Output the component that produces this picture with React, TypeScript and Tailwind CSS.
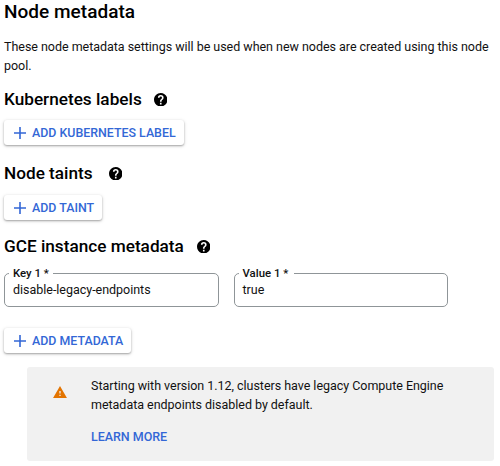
import React from 'react';

function HelpIcon() {
  return (
    <svg viewBox="2 2 20 20" className="mt-px size-[13.5px] shrink-0" fill="#000">
      <path d="M12 2C6.48 2 2 6.48 2 12s4.48 10 10 10 10-4.48 10-10S17.52 2 12 2zm1.2 17h-2.4v-2.4h2.4V19zm2.3-7.75-.9.92C13.7 12.9 13.2 13.5 13.2 15h-2.4v-.5c0-1.1.45-2.1 1.17-2.83l1.24-1.26c.37-.36.59-.86.59-1.41a1.8 1.8 0 0 0-3.6 0H7.8a4.2 4.2 0 0 1 8.4 0c0 .88-.36 1.68-.7 2.25z" />
    </svg>
  );
}

function SectionTitle({ children, gap }: { children: React.ReactNode; gap: string }) {
  return (
    <h2 className={`flex h-6 items-center text-[17.2px] font-medium leading-6 whitespace-nowrap ${gap}`}>
      <span>{children}</span>
      <HelpIcon />
    </h2>
  );
}

function AddButton({ label, className }: { label: string; className: string }) {
  return (
    <button
      className={`flex h-[25px] items-center gap-[6px] rounded-[3px] bg-white pl-[10px] text-[12.4px] font-medium whitespace-nowrap text-[#3367d6] shadow-[0_1px_2px_rgba(0,0,0,0.3),0_1px_4px_rgba(0,0,0,0.12)] ${className}`}
    >
      <svg viewBox="0 0 12 12" className="size-3 shrink-0" fill="none" stroke="currentColor" strokeWidth="1.6">
        <path d="M6 0v12M0 6h12" />
      </svg>
      <span className="pt-px">{label}</span>
    </button>
  );
}

function Field({ label, value, legendWidth }: { label: string; value: string; legendWidth: string }) {
  return (
    <fieldset className="h-[40px] w-[214.5px] rounded-[5px] border border-[#8f9598] pl-[4px]">
      <legend className={`h-[13px] pl-[4px] text-[11.4px] font-medium leading-[13px] whitespace-nowrap ${legendWidth}`}>{label}</legend>
      <div className="pl-[4px] text-[12.5px] leading-[19px] tracking-[-0.02px]">{value}</div>
    </fieldset>
  );
}

export default function App() {
  return (
    <main
      className="h-[466px] w-[500px] overflow-hidden bg-white pl-1 text-[#111]"
      style={{ fontFamily: 'Roboto, "Liberation Sans", sans-serif' }}
    >
      <h1 className="h-6 text-[19px] font-medium leading-6 tracking-[0.03px] text-black">Node metadata</h1>
      <p className="mt-[13px] text-[12.5px] leading-[19px] tracking-[-0.03px] whitespace-nowrap">
        These node metadata settings will be used when new nodes are created using this node
        <br />
        pool.
      </p>
      <div className="mt-[12px] text-black">
        <SectionTitle gap="gap-[12px]">Kubernetes labels</SectionTitle>
      </div>
      <AddButton label="ADD KUBERNETES LABEL" className="mt-[9px] w-[180px]" />
      <div className="mt-[16px] text-black">
        <SectionTitle gap="gap-[16px]">Node taints</SectionTitle>
      </div>
      <AddButton label="ADD TAINT" className="mt-[10px] w-[98px]" />
      <div className="mt-[14px] text-black">
        <SectionTitle gap="gap-[13px]">GCE instance metadata</SectionTitle>
      </div>
      <div className="mt-[9px] flex gap-[15px]">
        <Field label="Key 1 *" value="disable-legacy-endpoints" legendWidth="w-[44px]" />
        <Field label="Value 1 *" value="true" legendWidth="w-[55px]" />
      </div>
      <AddButton label="ADD METADATA" className="mt-[21px] w-[127px]" />
      <section className="mt-[14px] ml-[23px] flex h-[94px] w-[467px] rounded-[3px] bg-[#f1f1f1] pt-[9px] pl-[25.5px]">
        <svg viewBox="1 2 22 19" className="mt-[10px] h-[12px] w-[14px] shrink-0" fill="#e37400">
          <path d="M1 21h22L12 2 1 21zm12-3h-2v-2h2v2zm0-4h-2v-4h2v4z" />
        </svg>
        <div className="ml-[24.5px] text-[12.5px] leading-[19px] tracking-[-0.03px] whitespace-nowrap">
          <p>
            Starting with version 1.12, clusters have legacy Compute Engine
            <br />
            metadata endpoints disabled by default.
          </p>
          <a className="mt-[13px] block text-[12.5px] font-medium text-[#3367d6]">LEARN MORE</a>
        </div>
      </section>
    </main>
  );
}
